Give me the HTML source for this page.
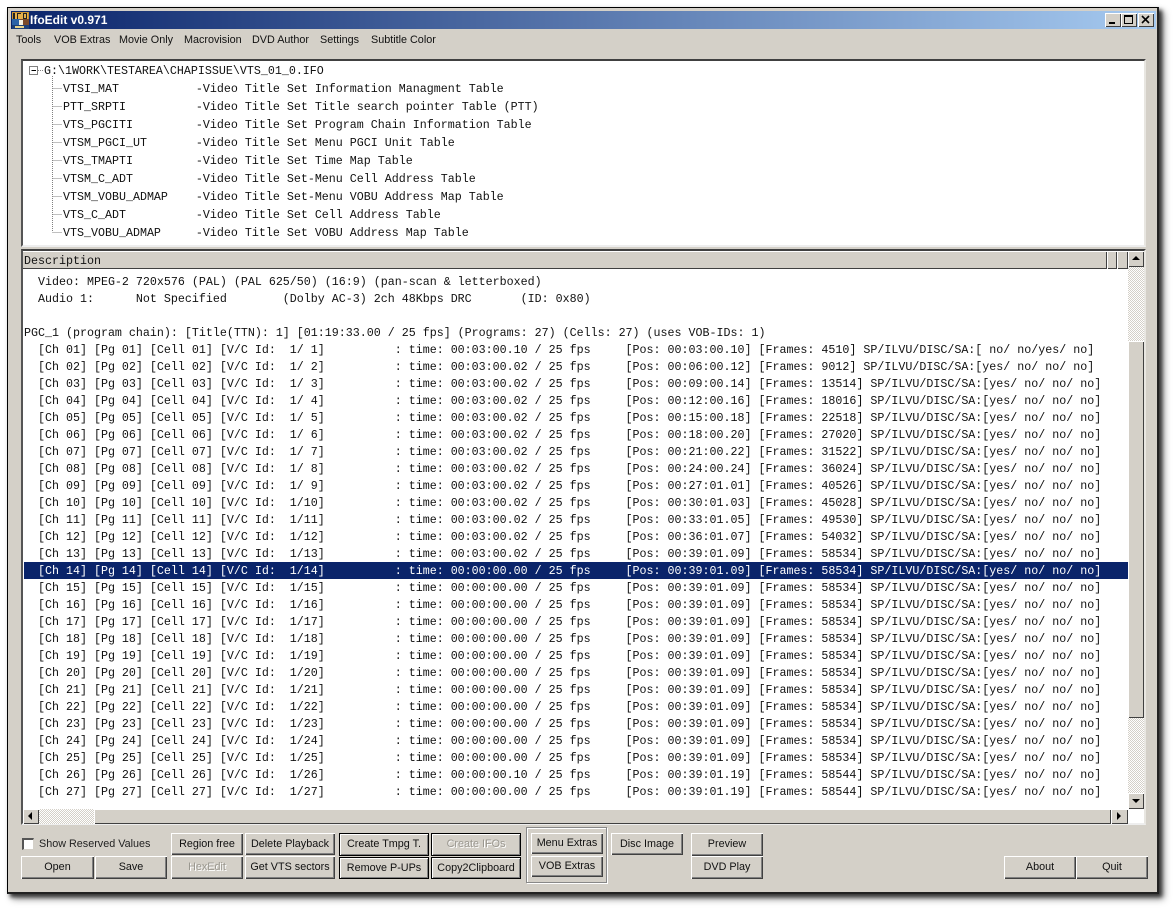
<!DOCTYPE html>
<html><head><meta charset="utf-8"><title>IfoEdit v0.971</title>
<style>
html,body{margin:0;padding:0;background:#fff;width:1173px;height:908px;overflow:hidden}
*{box-sizing:border-box}
.a{position:absolute}
#win{position:absolute;left:7px;top:7px;width:1152px;height:887px;background:#d4d0c8;border:1px solid #000;box-shadow:3px 3px 4px #333,5px 5px 7px #999;border-right:2px solid #222;border-bottom:2px solid #222}
#title{position:absolute;left:11px;top:11px;width:1145px;height:18px;background:linear-gradient(90deg,#0a246a,#a6caf0)}
#ttext{position:absolute;left:30px;top:12px;font:bold 12px/16px "Liberation Sans",sans-serif;color:#fff;white-space:pre}
.menu{position:absolute;top:32px;font:10.8px/14px "Liberation Sans",sans-serif;color:#111;white-space:pre}
.sunk{position:absolute;background:#fff;border-top:2px solid #404040;border-left:2px solid #555;border-right:2px solid #e8e6e1;border-bottom:2px solid #eee}
.m{font:11.667px/17px "Liberation Mono",monospace;color:#111}
#tree div{position:absolute;line-height:20px;height:18px;white-space:pre}
#list{position:absolute;left:24px;top:273px;width:1104px;height:536px;overflow:hidden}
#list div{height:17px;line-height:19px;white-space:pre}
#list div.s{background:#0a246a;color:#fff}
.b{position:absolute;background:#d4d0c8;font:10.8px/1 "Liberation Sans",sans-serif;color:#111;display:flex;align-items:center;justify-content:center;white-space:pre;box-shadow:inset 1px 1px 0 #fff,inset -1px -1px 0 #404040,inset -2px -2px 0 #808080}
.k{outline:1px solid #000;outline-offset:-1px;box-shadow:inset 2px 2px 0 #fff,inset -2px -2px 0 #808080}
.d{color:#9a978f;text-shadow:1px 1px 0 #fff}
.h{position:absolute;background:#d4d0c8;box-shadow:inset 1px 1px 0 #fff,inset -1px -1px 0 #404040}
.dither{position:absolute;background-color:#fff;background-image:linear-gradient(45deg,#d4d0c8 25%,transparent 25%,transparent 75%,#d4d0c8 75%),linear-gradient(45deg,#d4d0c8 25%,transparent 25%,transparent 75%,#d4d0c8 75%);background-size:2px 2px;background-position:0 0,1px 1px}
svg{position:absolute;display:block}
</style></head><body>
<div id="win"></div>
<div id="title"></div>
<svg style="left:12px;top:12px" width="17" height="17" viewBox="0 0 17 17"><rect width="17" height="17" fill="#c9912f"/><rect x="1" y="1" width="15" height="6" fill="#e8b04a"/><rect x="1" y="1" width="2" height="6" fill="#222"/><rect x="5" y="1" width="4" height="1" fill="#222"/><rect x="5" y="1" width="1" height="6" fill="#222"/><rect x="11" y="1" width="4" height="6" fill="#222"/><rect x="12" y="2" width="2" height="4" fill="#e8b04a"/><rect x="0" y="7" width="8" height="7" fill="#2c63a6"/><rect x="8" y="7" width="9" height="7" fill="#7a4a2a"/><rect x="7" y="8" width="4" height="6" fill="#f4f0e0"/><rect x="0" y="13" width="17" height="4" fill="#1c3f77"/><rect x="3" y="14" width="9" height="2" fill="#e8d48a"/></svg>
<div id="ttext">IfoEdit v0.971</div>
<div class="h" style="left:1105px;top:13px;width:16px;height:14px"><div class="a" style="left:4px;top:9px;width:6px;height:2px;background:#000"></div></div>
<div class="h" style="left:1121px;top:13px;width:16px;height:14px"><div class="a" style="left:3px;top:2px;width:9px;height:9px;border:1px solid #000;border-top-width:2px"></div></div>
<div class="h" style="left:1138px;top:13px;width:16px;height:14px"><svg style="left:3px;top:2px" width="10" height="10" viewBox="0 0 10 10"><path d="M1 1L8 8M8 1L1 8" stroke="#000" stroke-width="1.6" fill="none"/></svg></div>
<div class="menu" style="left:16px;top:33px">Tools</div>
<div class="menu" style="left:54px;top:33px">VOB Extras</div>
<div class="menu" style="left:119px;top:33px">Movie Only</div>
<div class="menu" style="left:184px;top:33px">Macrovision</div>
<div class="menu" style="left:252px;top:33px">DVD Author</div>
<div class="menu" style="left:320px;top:33px">Settings</div>
<div class="menu" style="left:371px;top:33px">Subtitle Color</div>

<div class="sunk" style="left:21px;top:59px;width:1125px;height:188px"></div>
<svg style="left:28px;top:64px" width="40" height="172" viewBox="0 0 40 172"><rect x="1.5" y="2.5" width="8" height="8" fill="#fff" stroke="#808080"/><path d="M3.5 6.5H8" stroke="#000"/><path d="M10 6.5H15M24.5 12V168M24.5 24.5H34M24.5 42.5H34M24.5 60.5H34M24.5 78.5H34M24.5 96.5H34M24.5 114.5H34M24.5 132.5H34M24.5 150.5H34M24.5 168.5H34" stroke="#808080" stroke-dasharray="1 1" fill="none"/></svg>
<div id="tree" class="m">
<div style="left:44px;top:61px">G:\1WORK\TESTAREA\CHAPISSUE\VTS_01_0.IFO</div>
<div style="left:63px;top:79px">VTSI_MAT           -Video Title Set Information Managment Table</div>
<div style="left:63px;top:97px">PTT_SRPTI          -Video Title Set Title search pointer Table (PTT)</div>
<div style="left:63px;top:115px">VTS_PGCITI         -Video Title Set Program Chain Information Table</div>
<div style="left:63px;top:133px">VTSM_PGCI_UT       -Video Title Set Menu PGCI Unit Table</div>
<div style="left:63px;top:151px">VTS_TMAPTI         -Video Title Set Time Map Table</div>
<div style="left:63px;top:169px">VTSM_C_ADT         -Video Title Set-Menu Cell Address Table</div>
<div style="left:63px;top:187px">VTSM_VOBU_ADMAP    -Video Title Set-Menu VOBU Address Map Table</div>
<div style="left:63px;top:205px">VTS_C_ADT          -Video Title Set Cell Address Table</div>
<div style="left:63px;top:223px">VTS_VOBU_ADMAP     -Video Title Set VOBU Address Map Table</div>
</div>

<div class="sunk" style="left:21px;top:249px;width:1125px;height:576px"></div>
<div class="h m" style="left:23px;top:251px;width:1084px;height:18px;padding-left:1px;line-height:21px;box-shadow:inset 0 1px 0 #fff,inset -1px -1px 0 #404040">Description</div>
<div class="h" style="left:1107px;top:251px;width:10px;height:18px"></div>
<div class="h" style="left:1117px;top:251px;width:11px;height:18px"></div>
<div id="list" class="m">
<div>  Video: MPEG-2 720x576 (PAL) (PAL 625/50) (16:9) (pan-scan &amp; letterboxed)</div>
<div>  Audio 1:      Not Specified        (Dolby AC-3) 2ch 48Kbps DRC       (ID: 0x80)</div>
<div> </div>
<div>PGC_1 (program chain): [Title(TTN): 1] [01:19:33.00 / 25 fps] (Programs: 27) (Cells: 27) (uses VOB-IDs: 1)</div>
<div>  [Ch 01] [Pg 01] [Cell 01] [V/C Id:  1/ 1]          : time: 00:03:00.10 / 25 fps     [Pos: 00:03:00.10] [Frames: 4510] SP/ILVU/DISC/SA:[ no/ no/yes/ no]</div>
<div>  [Ch 02] [Pg 02] [Cell 02] [V/C Id:  1/ 2]          : time: 00:03:00.02 / 25 fps     [Pos: 00:06:00.12] [Frames: 9012] SP/ILVU/DISC/SA:[yes/ no/ no/ no]</div>
<div>  [Ch 03] [Pg 03] [Cell 03] [V/C Id:  1/ 3]          : time: 00:03:00.02 / 25 fps     [Pos: 00:09:00.14] [Frames: 13514] SP/ILVU/DISC/SA:[yes/ no/ no/ no]</div>
<div>  [Ch 04] [Pg 04] [Cell 04] [V/C Id:  1/ 4]          : time: 00:03:00.02 / 25 fps     [Pos: 00:12:00.16] [Frames: 18016] SP/ILVU/DISC/SA:[yes/ no/ no/ no]</div>
<div>  [Ch 05] [Pg 05] [Cell 05] [V/C Id:  1/ 5]          : time: 00:03:00.02 / 25 fps     [Pos: 00:15:00.18] [Frames: 22518] SP/ILVU/DISC/SA:[yes/ no/ no/ no]</div>
<div>  [Ch 06] [Pg 06] [Cell 06] [V/C Id:  1/ 6]          : time: 00:03:00.02 / 25 fps     [Pos: 00:18:00.20] [Frames: 27020] SP/ILVU/DISC/SA:[yes/ no/ no/ no]</div>
<div>  [Ch 07] [Pg 07] [Cell 07] [V/C Id:  1/ 7]          : time: 00:03:00.02 / 25 fps     [Pos: 00:21:00.22] [Frames: 31522] SP/ILVU/DISC/SA:[yes/ no/ no/ no]</div>
<div>  [Ch 08] [Pg 08] [Cell 08] [V/C Id:  1/ 8]          : time: 00:03:00.02 / 25 fps     [Pos: 00:24:00.24] [Frames: 36024] SP/ILVU/DISC/SA:[yes/ no/ no/ no]</div>
<div>  [Ch 09] [Pg 09] [Cell 09] [V/C Id:  1/ 9]          : time: 00:03:00.02 / 25 fps     [Pos: 00:27:01.01] [Frames: 40526] SP/ILVU/DISC/SA:[yes/ no/ no/ no]</div>
<div>  [Ch 10] [Pg 10] [Cell 10] [V/C Id:  1/10]          : time: 00:03:00.02 / 25 fps     [Pos: 00:30:01.03] [Frames: 45028] SP/ILVU/DISC/SA:[yes/ no/ no/ no]</div>
<div>  [Ch 11] [Pg 11] [Cell 11] [V/C Id:  1/11]          : time: 00:03:00.02 / 25 fps     [Pos: 00:33:01.05] [Frames: 49530] SP/ILVU/DISC/SA:[yes/ no/ no/ no]</div>
<div>  [Ch 12] [Pg 12] [Cell 12] [V/C Id:  1/12]          : time: 00:03:00.02 / 25 fps     [Pos: 00:36:01.07] [Frames: 54032] SP/ILVU/DISC/SA:[yes/ no/ no/ no]</div>
<div>  [Ch 13] [Pg 13] [Cell 13] [V/C Id:  1/13]          : time: 00:03:00.02 / 25 fps     [Pos: 00:39:01.09] [Frames: 58534] SP/ILVU/DISC/SA:[yes/ no/ no/ no]</div>
<div class="s">  [Ch 14] [Pg 14] [Cell 14] [V/C Id:  1/14]          : time: 00:00:00.00 / 25 fps     [Pos: 00:39:01.09] [Frames: 58534] SP/ILVU/DISC/SA:[yes/ no/ no/ no]</div>
<div>  [Ch 15] [Pg 15] [Cell 15] [V/C Id:  1/15]          : time: 00:00:00.00 / 25 fps     [Pos: 00:39:01.09] [Frames: 58534] SP/ILVU/DISC/SA:[yes/ no/ no/ no]</div>
<div>  [Ch 16] [Pg 16] [Cell 16] [V/C Id:  1/16]          : time: 00:00:00.00 / 25 fps     [Pos: 00:39:01.09] [Frames: 58534] SP/ILVU/DISC/SA:[yes/ no/ no/ no]</div>
<div>  [Ch 17] [Pg 17] [Cell 17] [V/C Id:  1/17]          : time: 00:00:00.00 / 25 fps     [Pos: 00:39:01.09] [Frames: 58534] SP/ILVU/DISC/SA:[yes/ no/ no/ no]</div>
<div>  [Ch 18] [Pg 18] [Cell 18] [V/C Id:  1/18]          : time: 00:00:00.00 / 25 fps     [Pos: 00:39:01.09] [Frames: 58534] SP/ILVU/DISC/SA:[yes/ no/ no/ no]</div>
<div>  [Ch 19] [Pg 19] [Cell 19] [V/C Id:  1/19]          : time: 00:00:00.00 / 25 fps     [Pos: 00:39:01.09] [Frames: 58534] SP/ILVU/DISC/SA:[yes/ no/ no/ no]</div>
<div>  [Ch 20] [Pg 20] [Cell 20] [V/C Id:  1/20]          : time: 00:00:00.00 / 25 fps     [Pos: 00:39:01.09] [Frames: 58534] SP/ILVU/DISC/SA:[yes/ no/ no/ no]</div>
<div>  [Ch 21] [Pg 21] [Cell 21] [V/C Id:  1/21]          : time: 00:00:00.00 / 25 fps     [Pos: 00:39:01.09] [Frames: 58534] SP/ILVU/DISC/SA:[yes/ no/ no/ no]</div>
<div>  [Ch 22] [Pg 22] [Cell 22] [V/C Id:  1/22]          : time: 00:00:00.00 / 25 fps     [Pos: 00:39:01.09] [Frames: 58534] SP/ILVU/DISC/SA:[yes/ no/ no/ no]</div>
<div>  [Ch 23] [Pg 23] [Cell 23] [V/C Id:  1/23]          : time: 00:00:00.00 / 25 fps     [Pos: 00:39:01.09] [Frames: 58534] SP/ILVU/DISC/SA:[yes/ no/ no/ no]</div>
<div>  [Ch 24] [Pg 24] [Cell 24] [V/C Id:  1/24]          : time: 00:00:00.00 / 25 fps     [Pos: 00:39:01.09] [Frames: 58534] SP/ILVU/DISC/SA:[yes/ no/ no/ no]</div>
<div>  [Ch 25] [Pg 25] [Cell 25] [V/C Id:  1/25]          : time: 00:00:00.00 / 25 fps     [Pos: 00:39:01.09] [Frames: 58534] SP/ILVU/DISC/SA:[yes/ no/ no/ no]</div>
<div>  [Ch 26] [Pg 26] [Cell 26] [V/C Id:  1/26]          : time: 00:00:00.10 / 25 fps     [Pos: 00:39:01.19] [Frames: 58544] SP/ILVU/DISC/SA:[yes/ no/ no/ no]</div>
<div>  [Ch 27] [Pg 27] [Cell 27] [V/C Id:  1/27]          : time: 00:00:00.00 / 25 fps     [Pos: 00:39:01.19] [Frames: 58544] SP/ILVU/DISC/SA:[yes/ no/ no/ no]</div>
</div>

<div class="dither" style="left:1128px;top:267px;width:16px;height:526px"></div>
<div class="h" style="left:1128px;top:251px;width:16px;height:16px"><svg style="left:4px;top:5px" width="8" height="5"><path d="M4 0L8 4H0Z" fill="#000"/></svg></div>
<div class="h" style="left:1128px;top:341px;width:16px;height:377px"></div>
<div class="h" style="left:1128px;top:793px;width:16px;height:16px"><svg style="left:4px;top:6px" width="8" height="5"><path d="M0 0H8L4 4Z" fill="#000"/></svg></div>

<div class="dither" style="left:39px;top:809px;width:55px;height:15px"></div>
<div class="h" style="left:23px;top:809px;width:16px;height:15px"><svg style="left:5px;top:3px" width="5" height="8"><path d="M4 0V8L0 4Z" fill="#000"/></svg></div>
<div class="h" style="left:94px;top:809px;width:1017px;height:15px"></div>
<div class="h" style="left:1111px;top:809px;width:17px;height:15px"><svg style="left:6px;top:3px" width="5" height="8"><path d="M0 0V8L4 4Z" fill="#000"/></svg></div>

<div class="a" style="left:22px;top:838px;width:12px;height:12px;background:#fff;border-top:2px solid #555;border-left:2px solid #555;border-right:1px solid #d4d0c8;border-bottom:1px solid #d4d0c8"></div>
<div class="a" style="left:39px;top:837px;font:10.8px/14px 'Liberation Sans',sans-serif;color:#222;white-space:pre">Show Reserved Values</div>
<div class="b" style="left:171px;top:833px;width:72px;height:22px">Region free</div>
<div class="b" style="left:245px;top:833px;width:90px;height:22px">Delete Playback</div>
<div class="b" style="left:21px;top:856px;width:73px;height:23px">Open</div>
<div class="b" style="left:95px;top:856px;width:72px;height:23px">Save</div>
<div class="b d" style="left:171px;top:856px;width:72px;height:23px">HexEdit</div>
<div class="b" style="left:245px;top:856px;width:90px;height:23px">Get VTS sectors</div>
<div class="b k" style="left:339px;top:833px;width:90px;height:23px">Create Tmpg T.</div>
<div class="b k" style="left:339px;top:857px;width:90px;height:22px">Remove P-UPs</div>
<div class="b k d" style="left:431px;top:833px;width:90px;height:23px">Create IFOs</div>
<div class="b k" style="left:431px;top:857px;width:90px;height:22px">Copy2Clipboard</div>
<div class="a" style="left:526px;top:827px;width:81px;height:56px;border:1px solid #888;box-shadow:inset 1px 1px 0 #fff,1px 1px 0 #fff"></div>
<div class="b" style="left:531px;top:833px;width:72px;height:21px">Menu Extras</div>
<div class="b" style="left:531px;top:856px;width:72px;height:21px">VOB Extras</div>
<div class="b" style="left:611px;top:833px;width:72px;height:22px">Disc Image</div>
<div class="b" style="left:691px;top:833px;width:72px;height:23px">Preview</div>
<div class="b" style="left:691px;top:856px;width:72px;height:23px">DVD Play</div>
<div class="b" style="left:1004px;top:856px;width:72px;height:23px">About</div>
<div class="b" style="left:1076px;top:856px;width:72px;height:23px">Quit</div>
</body></html>
